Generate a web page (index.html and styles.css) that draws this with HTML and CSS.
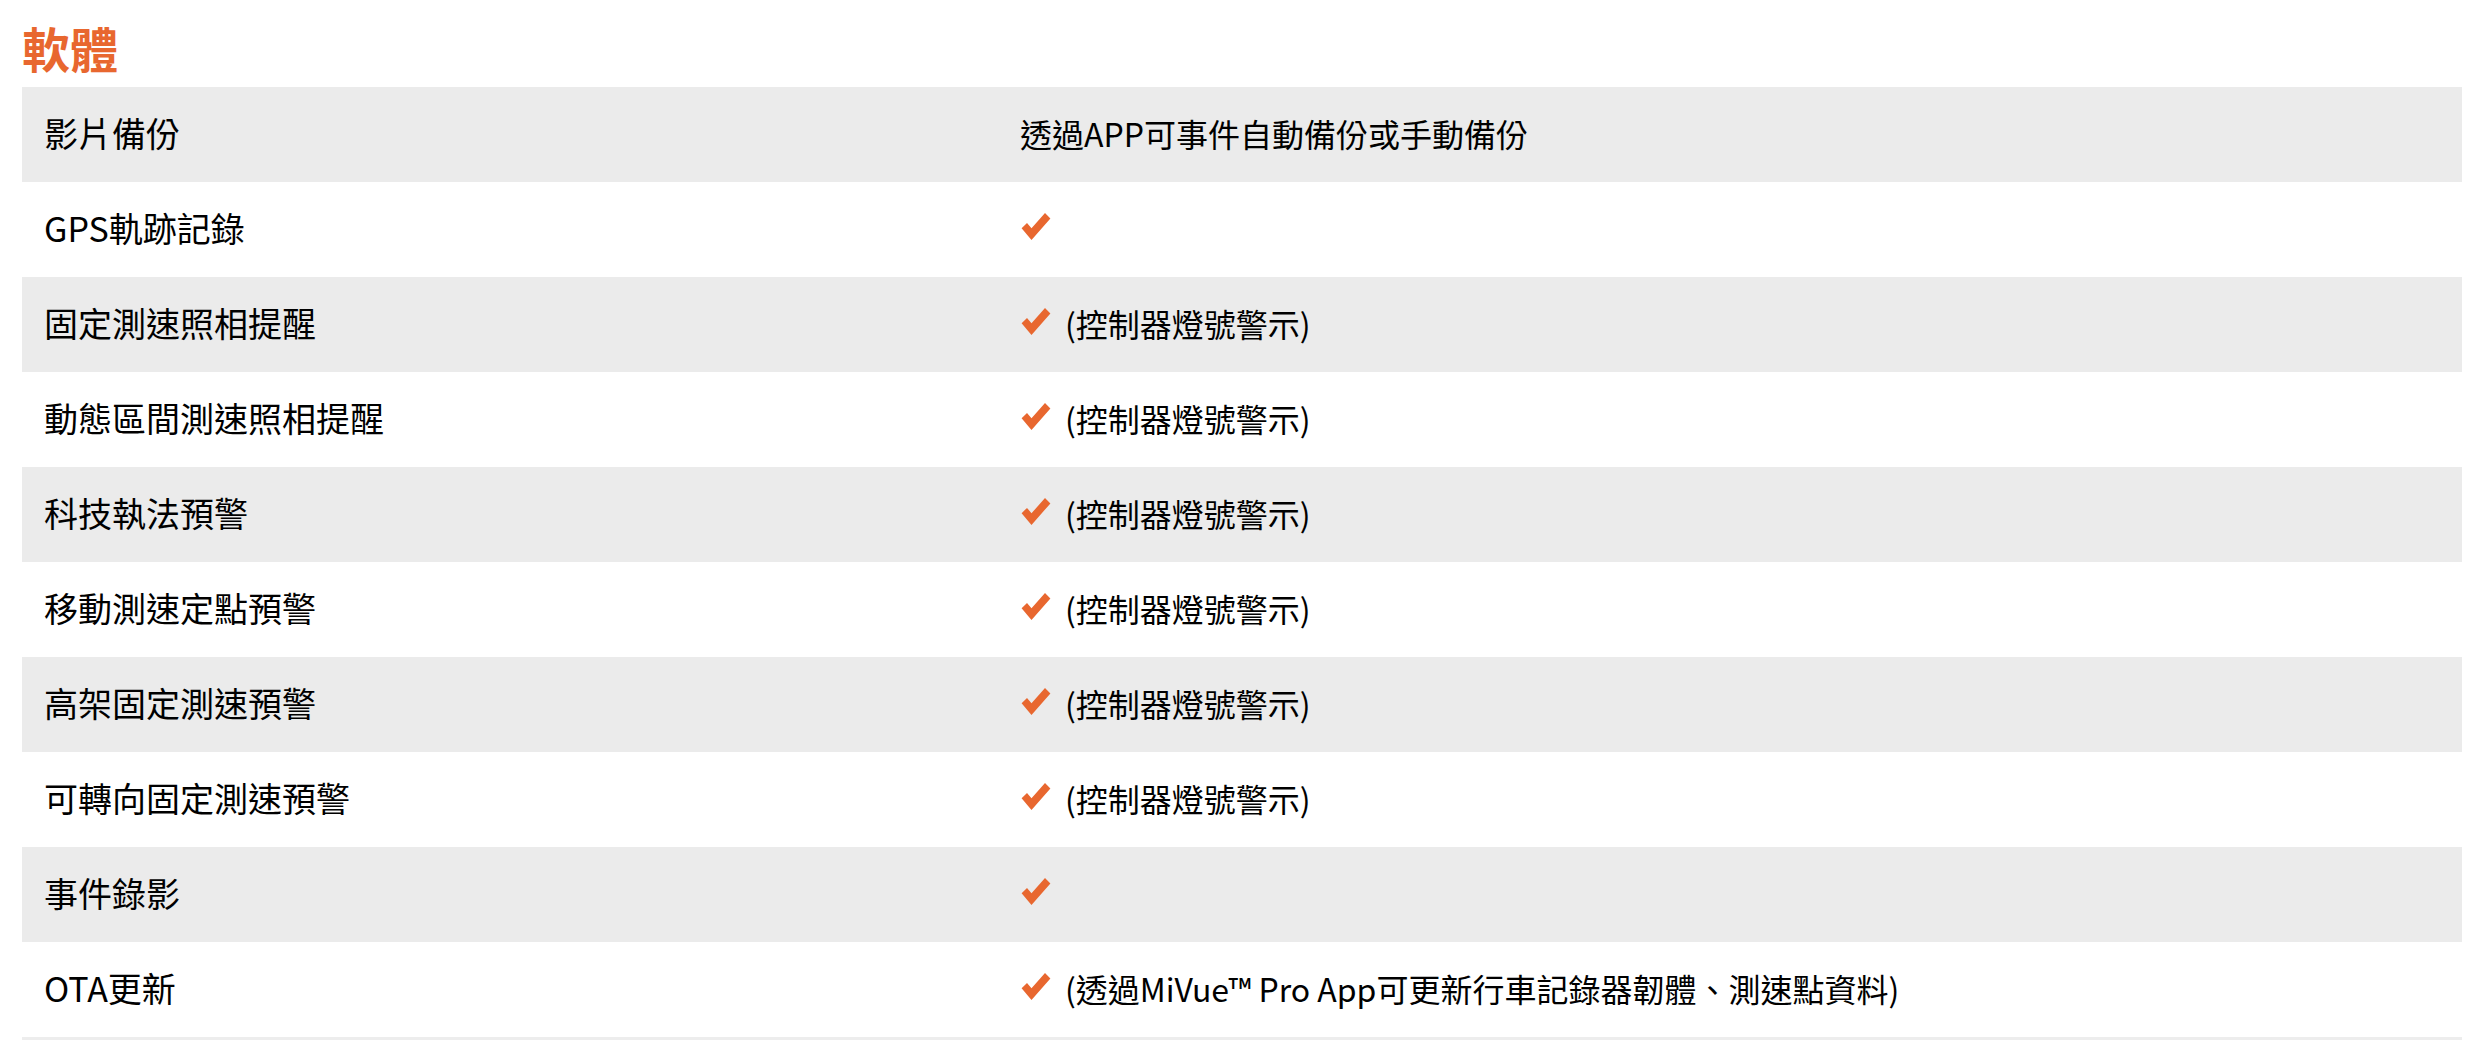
FILE: index.html
```html
<!DOCTYPE html>
<html lang="zh-Hant">
<head>
<meta charset="utf-8">
<title>軟體</title>
<link rel="stylesheet" href="styles.css">
</head>
<body>
<section class="spec">
  <h2 class="spec-title">軟體</h2>
  <div class="spec-table">
    <div class="row"><div class="cell name">影片備份</div><div class="cell value">透過APP可事件自動備份或手動備份</div></div>
    <div class="row"><div class="cell name">GPS軌跡記錄</div><div class="cell value"><svg class="check" viewBox="0 0 32 30"><path d="M0 17 L6 11 L11 17 L26 0 L32 6 L11 30 Z"/></svg></div></div>
    <div class="row"><div class="cell name">固定測速照相提醒</div><div class="cell value"><svg class="check" viewBox="0 0 32 30"><path d="M0 17 L6 11 L11 17 L26 0 L32 6 L11 30 Z"/></svg><span>(控制器燈號警示)</span></div></div>
    <div class="row"><div class="cell name">動態區間測速照相提醒</div><div class="cell value"><svg class="check" viewBox="0 0 32 30"><path d="M0 17 L6 11 L11 17 L26 0 L32 6 L11 30 Z"/></svg><span>(控制器燈號警示)</span></div></div>
    <div class="row"><div class="cell name">科技執法預警</div><div class="cell value"><svg class="check" viewBox="0 0 32 30"><path d="M0 17 L6 11 L11 17 L26 0 L32 6 L11 30 Z"/></svg><span>(控制器燈號警示)</span></div></div>
    <div class="row"><div class="cell name">移動測速定點預警</div><div class="cell value"><svg class="check" viewBox="0 0 32 30"><path d="M0 17 L6 11 L11 17 L26 0 L32 6 L11 30 Z"/></svg><span>(控制器燈號警示)</span></div></div>
    <div class="row"><div class="cell name">高架固定測速預警</div><div class="cell value"><svg class="check" viewBox="0 0 32 30"><path d="M0 17 L6 11 L11 17 L26 0 L32 6 L11 30 Z"/></svg><span>(控制器燈號警示)</span></div></div>
    <div class="row"><div class="cell name">可轉向固定測速預警</div><div class="cell value"><svg class="check" viewBox="0 0 32 30"><path d="M0 17 L6 11 L11 17 L26 0 L32 6 L11 30 Z"/></svg><span>(控制器燈號警示)</span></div></div>
    <div class="row"><div class="cell name">事件錄影</div><div class="cell value"><svg class="check" viewBox="0 0 32 30"><path d="M0 17 L6 11 L11 17 L26 0 L32 6 L11 30 Z"/></svg></div></div>
    <div class="row"><div class="cell name">OTA更新</div><div class="cell value"><svg class="check" viewBox="0 0 32 30"><path d="M0 17 L6 11 L11 17 L26 0 L32 6 L11 30 Z"/></svg><span>(透過MiVue™ Pro App可更新行車記錄器韌體、測速點資料)</span></div></div>
  </div>
</section>
</body>
</html>
```

FILE: styles.css
```css
html, body {
  margin: 0;
  padding: 0;
  background: #ffffff;
}

body {
  font-family: "Noto Sans CJK TC", "Noto Sans", sans-serif;
  color: #000000;
}

.spec {
  padding: 0 22px 0 22px;
}

.spec-title {
  margin: 0;
  height: 87px;
  box-sizing: border-box;
  padding-top: 16px;
  font-family: "Noto Sans CJK TC", sans-serif;
  font-size: 48px;
  line-height: 62px;
  font-weight: 700;
  color: #e8672f;
}

.spec-table {
  display: flex;
  flex-direction: column;
  border-bottom: 3px solid #ededed;
}

.row {
  display: grid;
  grid-template-columns: 40% 60%;
  height: 95px;
  align-items: center;
}

.row:nth-child(odd) {
  background: #ebebeb;
}

.cell {
  padding: 0 22px 4px 22px;
  font-size: 34px;
  line-height: 44px;
  font-weight: 400;
  display: flex;
  align-items: center;
}

.value {
  font-size: 32px;
  gap: 13px;
}

.check {
  width: 32px;
  height: 27px;
  fill: #e8672f;
  flex: none;
  margin-top: -3px;
}
```
